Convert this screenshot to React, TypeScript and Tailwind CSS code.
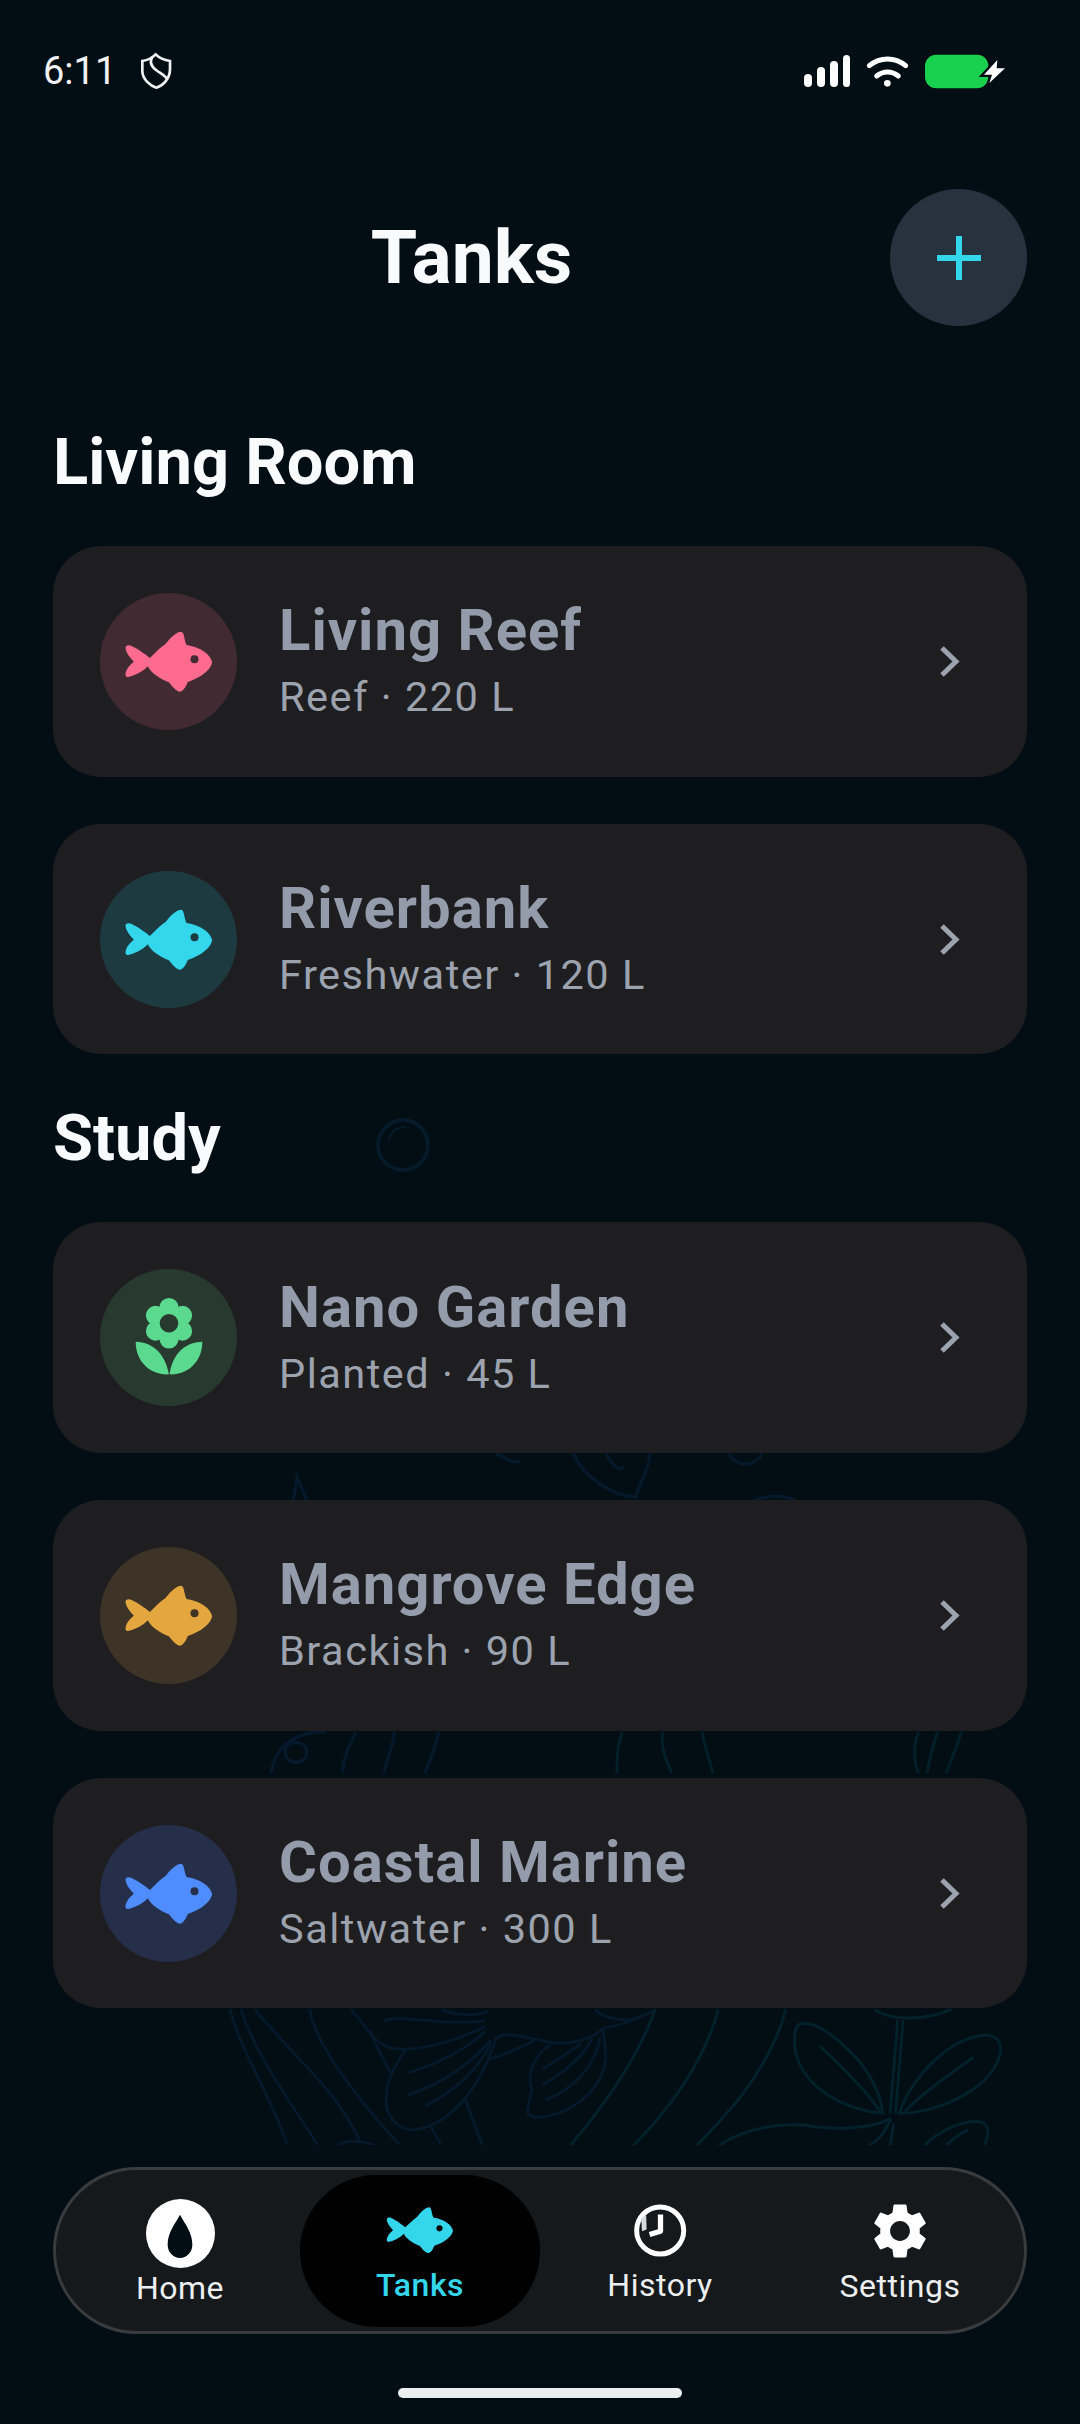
import { MdSettings } from "react-icons/md";

const BG = "#020d14";

function FishIcon({ color, eye, className }: { color: string; eye: string; className: string }) {
  return (
    <svg viewBox="98 120 275 195" className={className}>
      <path
        fill={color}
        d="M178 207C195 190 210 175 225 165C240 145 258 128 272 128C282 130 280 150 288 168C330 175 360 195 365 220C362 240 335 265 292 279C285 295 278 308 266 308C255 305 245 292 235 280C205 268 180 250 172 232C155 250 125 264 110 264C102 262 105 250 110 240C115 230 125 222 130 218C118 205 105 190 105 175C106 168 115 167 122 170C140 178 165 195 178 207Z"
      />
      <circle cx="312" cy="211" r="12" fill={eye} />
    </svg>
  );
}

function FlowerIcon({ color, hole }: { color: string; hole: string }) {
  const petals = [0, 60, 120, 180, 240, 300].map((deg) => {
    const rad = (deg * Math.PI) / 180;
    return { x: 235.5 + 47 * Math.sin(rad), y: 173 - 47 * Math.cos(rad) };
  });
  return (
    <svg viewBox="130 95 211 245" className="h-[82px] w-[70px]">
      {petals.map((p, i) => (
        <circle key={i} cx={p.x} cy={p.y} r="29" fill={color} />
      ))}
      <circle cx="235.5" cy="173" r="40" fill={color} />
      <circle cx="235.5" cy="173" r="28" fill={hole} />
      <path fill={color} d="M135 229C190 230 225 270 235 327C180 330 135 290 135 229Z" />
      <path fill={color} d="M336 229C280 230 245 270 237 327C290 330 336 290 336 229Z" />
    </svg>
  );
}

function Chevron() {
  return (
    <svg viewBox="0 0 21 31" className="h-[31px] w-[21px]">
      <path d="M3 2L17 15.5L3 29" fill="none" stroke="#9ca3af" strokeWidth="5" />
    </svg>
  );
}

function StatusBar() {
  return (
    <div className="flex h-[142px] items-center justify-between pl-[43px] pr-[74px]">
      <div className="flex items-center gap-[23px]">
        <span className="text-[38px] leading-none text-[#f1f2f3]">6:11</span>
        <svg viewBox="355 65 105 120" className="h-[40px] w-[35px]" fill="none" stroke="#f1f2f3" strokeWidth="8">
          <path d="M405 75C390 90 378 93 365 95L365 125C365 150 390 170 407 175C425 170 448 150 448 120L448 95C430 92 418 88 405 75Z" />
          <path d="M395 82C385 100 395 115 410 125C425 135 435 140 440 150" />
        </svg>
      </div>
      <div className="flex items-center">
        <div className="flex h-[32px] items-end gap-[5px]">
          <div className="h-[13px] w-[8px] rounded-full bg-white" />
          <div className="h-[20px] w-[8px] rounded-full bg-white" />
          <div className="h-[26px] w-[8px] rounded-full bg-white" />
          <div className="h-[32px] w-[7px] rounded-full bg-white" />
        </div>
        <svg viewBox="315 70 135 105" className="ml-[15px] h-[35px] w-[45px]" fill="none" stroke="#fff" strokeWidth="15" strokeLinecap="round">
          <path d="M328 105C360 78 405 78 437 105" />
          <path d="M350 136C370 120 395 120 415 136" />
          <circle cx="382" cy="158" r="10" fill="#fff" stroke="none" />
        </svg>
        <svg viewBox="495 70 243 105" className="ml-[15px] h-[35px] w-[81px]">
          <rect x="495" y="72" width="190" height="101" rx="34" fill="#1ad14f" />
          <path
            d="M712 88L672 132L696 132L688 157L735 113L710 113Z"
            fill="#fff"
            stroke={BG}
            strokeWidth="14"
            paintOrder="stroke"
          />
        </svg>
      </div>
    </div>
  );
}

function Watermark() {
  return (
    <svg viewBox="0 0 1080 2145" className="absolute left-0 top-0 h-[2145px] w-[1080px]" fill="none">
      <circle cx="403" cy="1145" r="25" stroke="#051a2a" strokeWidth="4" />
      <path d="M388 1141C390 1131 398 1127 406 1127" stroke="#051a2a" strokeWidth="2" />
      {/* band between the cards, coordinates taken off the 1.823 x 3 crop */}
      <g transform="translate(200 1440) scale(0.5485 0.3333)" stroke="#05192b" strokeWidth="3.5">
        <path vectorEffect="non-scaling-stroke" d="M170 180L177 112L195 180" />
        <path vectorEffect="non-scaling-stroke" d="M540 40C560 60 575 70 585 65" />
        <path vectorEffect="non-scaling-stroke" d="M680 40C700 110 750 170 795 170C800 130 820 90 820 40" />
        <path vectorEffect="non-scaling-stroke" d="M740 40C750 70 765 100 772 80" />
        <path vectorEffect="non-scaling-stroke" d="M965 40C975 80 1010 85 1025 40" />
        <path vectorEffect="non-scaling-stroke" d="M1010 180C1040 165 1060 165 1085 180" />
        <path vectorEffect="non-scaling-stroke" d="M130 1000C135 930 165 875 230 875" />
        <ellipse vectorEffect="non-scaling-stroke" cx="175" cy="937" rx="20" ry="30" />
        <path vectorEffect="non-scaling-stroke" d="M285 875C270 920 260 960 260 1000" />
        <path vectorEffect="non-scaling-stroke" d="M355 875C350 930 340 960 335 1000" />
        <path vectorEffect="non-scaling-stroke" d="M435 875C430 920 420 960 410 1000" />
      </g>
      <g transform="translate(200 1440) scale(0.5485 0.3333)" stroke="#03202a" strokeWidth="3">
        <path vectorEffect="non-scaling-stroke" d="M770 875C760 920 760 960 760 1000" />
        <path vectorEffect="non-scaling-stroke" d="M843 875C840 930 850 960 860 1000" />
        <path vectorEffect="non-scaling-stroke" d="M915 875C920 920 930 960 935 1000" />
        <path vectorEffect="non-scaling-stroke" d="M1310 875C1300 920 1300 960 1310 1000" />
        <path vectorEffect="non-scaling-stroke" d="M1345 875C1335 920 1330 960 1325 1000" />
        <path vectorEffect="non-scaling-stroke" d="M1388 875C1380 920 1370 960 1360 1000" />
      </g>
      {/* lower garden below the last card */}
      <g transform="translate(200 1980) scale(0.5485 0.3333)" stroke="#05192b" strokeWidth="3">
        {[
          "M55 88C70 200 130 350 160 497",
          "M75 88C100 230 180 400 215 497",
          "M100 88C170 230 250 330 290 480",
          "M200 88C210 200 300 380 365 497",
          "M275 88C310 150 320 210 370 208C430 205 480 170 520 140",
          "M335 122C370 100 430 140 520 122",
          "M310 150C320 200 335 240 348 280",
          "M375 208C360 250 335 300 340 380C345 420 365 450 390 450C440 440 490 370 525 240L540 175C560 150 590 175 650 190C690 190 720 170 735 145L740 230C735 330 680 400 620 412C590 410 595 400 605 330C595 280 610 220 640 195",
          "M380 278C440 250 490 200 520 155",
          "M380 345C440 310 490 260 530 180",
          "M410 378C470 330 510 260 530 190",
          "M525 240C560 220 590 200 610 180",
          "M483 355L515 497",
          "M420 437L440 497",
          "M625 268C650 240 680 210 695 190",
          "M625 315C660 280 700 230 715 175",
          "M630 360C680 330 720 260 730 170",
          "M735 145C770 135 810 110 830 88",
          "M720 88C740 120 780 130 810 105",
          "M440 88C460 105 500 110 525 95",
          "M250 497C265 478 295 480 320 497",
        ].map((d, i) => (
          <path key={i} d={d} vectorEffect="non-scaling-stroke" />
        ))}
      </g>
      <g transform="translate(200 1980) scale(0.5485 0.3333)" stroke="#03212b" strokeWidth="3">
        {[
          "M830 88C800 230 740 370 675 497",
          "M945 88C920 240 860 380 790 497",
          "M1068 88C1040 260 970 390 905 497",
          "M1090 135C1120 115 1160 170 1200 240C1225 290 1240 340 1245 400C1180 390 1100 330 1085 210C1083 170 1085 145 1090 135Z",
          "M1130 198C1170 260 1220 340 1240 395",
          "M1460 210C1460 170 1440 160 1420 168C1370 180 1300 280 1275 400C1350 400 1450 320 1460 210Z",
          "M1410 232C1360 290 1310 350 1285 395",
          "M1272 120L1258 400",
          "M1282 120L1268 400",
          "M945 497C990 450 1040 430 1100 435C1150 450 1220 450 1260 415",
          "M1260 415C1250 450 1240 480 1220 497",
          "M1265 430L1258 497",
          "M1320 497C1350 450 1390 420 1420 425C1440 430 1440 460 1430 497",
          "M1400 450C1380 465 1370 480 1360 497",
          "M1230 88C1250 115 1310 130 1370 88",
        ].map((d, i) => (
          <path key={i} d={d} vectorEffect="non-scaling-stroke" />
        ))}
      </g>
    </svg>
  );
}

type Tank = { name: string; meta: string; color: string; disc: string; icon?: "flower" };

const sections: { title: string; tanks: Tank[] }[] = [
  {
    title: "Living Room",
    tanks: [
      { name: "Living Reef", meta: "Reef · 220 L", color: "#ff6b8f", disc: "#412a31" },
      { name: "Riverbank", meta: "Freshwater · 120 L", color: "#33d6ea", disc: "#1e3a41" },
    ],
  },
  {
    title: "Study",
    tanks: [
      { name: "Nano Garden", meta: "Planted · 45 L", color: "#5ad98f", disc: "#283a30", icon: "flower" },
      { name: "Mangrove Edge", meta: "Brackish · 90 L", color: "#e4a73f", disc: "#3d3326" },
      { name: "Coastal Marine", meta: "Saltwater · 300 L", color: "#4f8cff", disc: "#252f4a" },
    ],
  },
];

function TankCard({ tank }: { tank: Tank }) {
  return (
    <div className="flex h-[230.7px] items-center rounded-[48px] bg-[#1e1e20] pl-[47px] pr-[67px]">
      <div
        className="flex h-[137px] w-[137px] shrink-0 items-center justify-center rounded-full"
        style={{ backgroundColor: tank.disc }}
      >
        {tank.icon === "flower" ? (
          <FlowerIcon color={tank.color} hole={tank.disc} />
        ) : (
          <FishIcon color={tank.color} eye={tank.disc} className="h-[65px] w-[92px]" />
        )}
      </div>
      <div className="ml-[42px] flex-1 pb-[4px]">
        <div className="text-[58px] font-bold leading-[66px] tracking-[1px] text-[#949cab]">{tank.name}</div>
        <div className="mt-[10px] text-[41.5px] leading-[48px] tracking-[1.5px] text-[#9ca3af]">{tank.meta}</div>
      </div>
      <Chevron />
    </div>
  );
}

function NavLabel({ text, active }: { text: string; active?: boolean }) {
  return (
    <span className={"text-[32px] leading-[36px] tracking-[0.5px] " + (active ? "font-medium text-[#33d6ea]" : "text-[#eceef0]")}>
      {text}
    </span>
  );
}

function NavBar() {
  return (
    <div className="grid h-[167px] grid-cols-4 items-center rounded-full border-[3px] border-[#393b3d] bg-[#15191c] px-[4px]">
      <div className="flex flex-col items-center pt-[4px]">
        <svg viewBox="48 50 207 207" className="mb-[2px] h-[69px] w-[69px]">
          <circle cx="151.5" cy="153.5" r="103.5" fill="#fff" />
          <path fill={BG} d="M150 97C135 125 113 150 113 187A37 40 0 0 0 187 187C187 150 165 125 150 97Z" />
        </svg>
        <NavLabel text="Home" />
      </div>
      <div className="flex h-[152px] flex-col items-center justify-center rounded-full bg-black pt-[7px]">
        <FishIcon color="#33d6ea" eye="#000" className="mb-[12px] h-[50px] w-[70px]" />
        <NavLabel text="Tanks" active />
      </div>
      <div className="flex flex-col items-center pt-[6px]">
        <svg viewBox="98 73 160 160" className="mb-[10px] h-[53px] w-[53px]" fill="none" stroke="#fff">
          <circle cx="177" cy="153" r="71" strokeWidth="15" />
          <path d="M178 105V155L145 165" strokeWidth="16" strokeLinejoin="round" />
          <path d="M120 115L135 108L136 150L122 155Z" fill="#d8dadc" stroke="none" />
        </svg>
        <NavLabel text="History" />
      </div>
      <div className="flex flex-col items-center pt-[6px]">
        <MdSettings color="#fff" size={66} className="-mt-[5px] mb-[4px]" />
        <NavLabel text="Settings" />
      </div>
    </div>
  );
}

export default function App() {
  return (
    <div
      className="relative flex h-[2424px] w-[1080px] flex-col overflow-hidden bg-[#020d14]"
      style={{ fontFamily: "Roboto, sans-serif" }}
    >
      <Watermark />
      <div className="relative flex flex-1 flex-col">
        <StatusBar />
        <div className="mt-[47px] flex items-center px-[53px]">
          <h1 className="flex-1 text-center text-[75px] font-bold leading-none text-[#f8fafc]">Tanks</h1>
          <button className="flex h-[137px] w-[137px] items-center justify-center rounded-full bg-[#26333e]">
            <svg viewBox="0 0 44 44" className="h-[44px] w-[44px]">
              <path d="M22 0V44M0 22H44" stroke="#33d6ea" strokeWidth="6" />
            </svg>
          </button>
        </div>
        <div className="mt-[100px] flex flex-col gap-[48px] px-[53px]">
          {sections.map((section) => (
            <section key={section.title}>
              <h2 className="mb-[48px] text-[65px] font-bold leading-[72px] text-[#f8fafc]">{section.title}</h2>
              <div className="flex flex-col gap-[47px]">
                {section.tanks.map((tank) => (
                  <TankCard key={tank.name} tank={tank} />
                ))}
              </div>
            </section>
          ))}
        </div>
        <div className="mt-auto px-[53px]">
          <NavBar />
        </div>
        <div className="mb-[26px] mt-[54px] flex justify-center">
          <div className="h-[10px] w-[284px] rounded-full bg-[#eceef0]" />
        </div>
      </div>
    </div>
  );
}
